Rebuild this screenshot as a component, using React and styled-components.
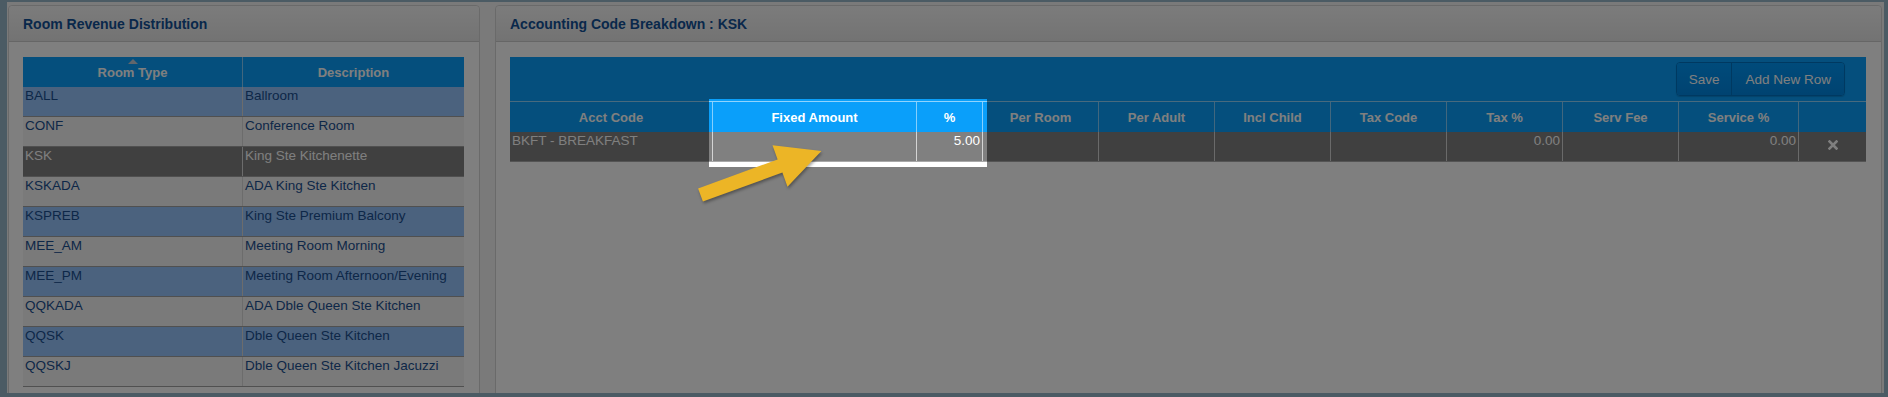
import React from 'react'
import styled, { createGlobalStyle } from 'styled-components'

const GlobalStyle = createGlobalStyle`
  html, body {
    margin: 0;
    padding: 0;
    background: #4b5b64;
  }
  body {
    font-family: "Liberation Sans", Arial, Helvetica, sans-serif;
  }
`

const rooms = [
  { code: 'BALL', name: 'Ballroom', tone: 'blue' },
  { code: 'CONF', name: 'Conference Room', tone: 'gray' },
  { code: 'KSK', name: 'King Ste Kitchenette', tone: 'selected' },
  { code: 'KSKADA', name: 'ADA King Ste Kitchen', tone: 'gray' },
  { code: 'KSPREB', name: 'King Ste Premium Balcony', tone: 'blue' },
  { code: 'MEE_AM', name: 'Meeting Room Morning', tone: 'gray' },
  { code: 'MEE_PM', name: 'Meeting Room Afternoon/Evening', tone: 'blue' },
  { code: 'QQKADA', name: 'ADA Dble Queen Ste Kitchen', tone: 'gray' },
  { code: 'QQSK', name: 'Dble Queen Ste Kitchen', tone: 'blue' },
  { code: 'QQSKJ', name: 'Dble Queen Ste Kitchen Jacuzzi', tone: 'gray' },
]

const acctCols = [
  { label: 'Acct Code', value: 'BKFT - BREAKFAST', align: 'left' },
  { label: 'Fixed Amount', value: '', align: 'right' },
  { label: '%', value: '5.00', align: 'right' },
  { label: 'Per Room', value: '', align: 'left' },
  { label: 'Per Adult', value: '', align: 'left' },
  { label: 'Incl Child', value: '', align: 'left' },
  { label: 'Tax Code', value: '', align: 'left' },
  { label: 'Tax %', value: '0.00', align: 'right' },
  { label: 'Serv Fee', value: '', align: 'left' },
  { label: 'Service %', value: '0.00', align: 'right' },
]

const ACCT_GRID = '202px 204px 66px 116px 116px 116px 116px 116px 116px 120px 1fr'

const rowBg = { blue: '#97c4fd', gray: '#f4f4f4', selected: '#808080' }

const RemoveIcon = () => (
  <svg width="10" height="10" viewBox="0 0 10 10">
    <path d="M1.5 1.5 L8.5 8.5 M8.5 1.5 L1.5 8.5" stroke="#ffffff" strokeWidth="2.6" strokeLinecap="square" />
  </svg>
)

// callout arrow drawn over the dimmed screenshot
const Arrow = () => (
  <ArrowMark width="150" height="75" viewBox="0 0 150 75">
    <polygon
      points="15.9,63.6 11.1,50.4 90.6,21.4 85.5,7.3 134.4,12.9 100.5,48.7 95.4,34.6"
      fill="#ecb526"
    />
  </ArrowMark>
)

const App = () => (
  <Frame>
    <GlobalStyle />
    <Screen>
      <Panel $width="472px">
        <PanelHeader>Room Revenue Distribution</PanelHeader>
        <PanelBody>
          <RoomHead>
            <HeadCell $sorted>Room Type</HeadCell>
            <HeadCell $divider>Description</HeadCell>
          </RoomHead>
          {rooms.map(r => (
            <RoomRow key={r.code} $tone={r.tone}>
              <RoomCell $tone={r.tone}>{r.code}</RoomCell>
              <RoomCell $tone={r.tone} $divider>{r.name}</RoomCell>
            </RoomRow>
          ))}
        </PanelBody>
      </Panel>

      <Panel $grow>
        <PanelHeader>Accounting Code Breakdown : KSK</PanelHeader>
        <PanelBody>
          <Toolbar>
            <ButtonGroup>
              <ToolButton>Save</ToolButton>
              <ToolButton $divider>Add New Row</ToolButton>
            </ButtonGroup>
          </Toolbar>
          <AcctHead>
            {acctCols.map((c, i) => (
              <HeadCell key={c.label} $divider={i > 0}>{c.label}</HeadCell>
            ))}
            <HeadCell $divider />
          </AcctHead>
          <AcctRow>
            {acctCols.map((c, i) => (
              <AcctCell key={c.label} $align={c.align} $divider={i > 0}>{c.value}</AcctCell>
            ))}
            <RemoveCell>
              <RemoveIcon />
            </RemoveCell>
          </AcctRow>
        </PanelBody>
      </Panel>

      <Spotlight />
      <Arrow />
    </Screen>
  </Frame>
)

export default App

const Frame = styled.div`
  height: 397px;
  box-sizing: border-box;
  padding: 2px 4px 4px 7px;
  background: #4b5b64;
`

const Screen = styled.div`
  position: relative;
  overflow: hidden;
  height: 391px;
  box-sizing: border-box;
  padding: 3px 2px 0 1px;
  display: flex;
  align-items: flex-start;
  gap: 15px;
  background: #f4f4f4;
`

const Panel = styled.section`
  flex: ${p => (p.$grow ? '1 1 auto' : `0 0 ${p.$width}`)};
  height: 420px;
  box-sizing: border-box;
  border: 1px solid #d4d4d4;
  border-radius: 4px;
  background: #fefefe;
  display: flex;
  flex-direction: column;
`

const PanelHeader = styled.header`
  height: 35px;
  flex: 0 0 35px;
  display: flex;
  align-items: center;
  padding: 0 14px;
  border-bottom: 1px solid #cccccc;
  border-radius: 4px 4px 0 0;
  background: linear-gradient(#f8f8f8, #e6e6e6);
  color: #135096;
  font-size: 14px;
  font-weight: bold;
`

const PanelBody = styled.div`
  padding: 15px 15px 0 14px;
  display: flex;
  flex-direction: column;
`

const HeadCell = styled.div`
  position: relative;
  display: flex;
  align-items: center;
  justify-content: center;
  color: #ffffff;
  font-size: 13px;
  font-weight: bold;
  border-left: ${p => (p.$divider ? '1px solid rgba(255,255,255,0.5)' : 'none')};

  &::before {
    content: '';
    display: ${p => (p.$sorted ? 'block' : 'none')};
    position: absolute;
    top: 2px;
    left: 50%;
    margin-left: -5px;
    border: 5px solid transparent;
    border-top: 0;
    border-bottom-color: #c4ccd6;
  }
`

const RoomHead = styled.div`
  display: grid;
  grid-template-columns: 219px 1fr;
  height: 30px;
  background: #0a9ffa;
`

const RoomRow = styled.div`
  display: grid;
  grid-template-columns: 219px 1fr;
  height: 29px;
  border-bottom: 1px solid #a0a0a0;
  background: ${p => rowBg[p.$tone]};
`

const RoomCell = styled.div`
  padding: 1px 2px 0;
  line-height: 16px;
  font-size: 13.5px;
  color: ${p => (p.$tone === 'selected' ? '#ffffff' : '#1a4f90')};
  border-left: ${p => (p.$divider ? '1px solid #d8d8d8' : 'none')};
`

const Toolbar = styled.div`
  height: 44px;
  display: flex;
  align-items: center;
  justify-content: flex-end;
  padding-right: 21px;
  background: #0a9ffa;
  border-bottom: 1px solid rgba(255,255,255,0.55);
`

const ButtonGroup = styled.div`
  display: flex;
  border: 1px solid #0072c2;
  border-radius: 4px;
  overflow: hidden;
  box-shadow: 0 1px 1px rgba(0,0,0,0.15);
`

const ToolButton = styled.button`
  height: 32px;
  padding: 0 ${p => (p.$divider ? '13px' : '12px')};
  border: 0;
  border-left: ${p => (p.$divider ? '1px solid #0072c2' : '0')};
  background: linear-gradient(#0096f6, #0086e2);
  color: #ffffff;
  font-family: "Liberation Sans", Arial, sans-serif;
  font-size: 13.5px;
`

const AcctHead = styled.div`
  display: grid;
  grid-template-columns: ${ACCT_GRID};
  height: 30px;
  background: #0a9ffa;
`

const AcctRow = styled.div`
  display: grid;
  grid-template-columns: ${ACCT_GRID};
  height: 29px;
  border-bottom: 1px solid #a8a8a8;
  background: #808080;
`

const AcctCell = styled.div`
  padding: 0 2px;
  line-height: 18px;
  font-size: 13.5px;
  color: #ffffff;
  text-align: ${p => p.$align};
  border-left: ${p => (p.$divider ? '1px solid #d4d4d4' : 'none')};
`

const RemoveCell = styled.div`
  display: flex;
  align-items: center;
  justify-content: center;
  padding-bottom: 4px;
  border-left: 1px solid #d4d4d4;
`

const Spotlight = styled.div`
  position: absolute;
  left: 702px;
  top: 97px;
  width: 278px;
  height: 68px;
  box-sizing: border-box;
  border-bottom: 5px solid #ffffff;
  box-shadow: 0 0 0 4000px rgba(0, 0, 0, 0.5);
  pointer-events: none;
  z-index: 5;
`

const ArrowMark = styled.svg`
  position: absolute;
  left: 680px;
  top: 136px;
  z-index: 6;
  filter: drop-shadow(1px 2px 1.5px rgba(0, 0, 0, 0.35));
`
